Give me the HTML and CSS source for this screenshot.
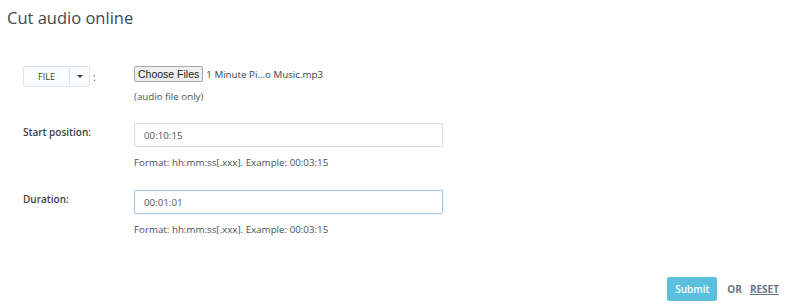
FILE: index.html
```html
<!DOCTYPE html>
<html lang="en">
<head>
    <meta charset="UTF-8">
    <title>Cut audio online</title>
    <link rel="stylesheet" href="styles.css">
</head>
<body>
    <h1 class="title">Cut audio online</h1>

    <form class="cut-form">
        <div class="row row-file">
            <div class="label-col">
                <div class="split-btn">
                    <span class="split-main">FILE</span>
                    <span class="split-caret"><span class="caret"></span></span>
                </div>
                <span class="colon">:</span>
            </div>
            <div class="control-col">
                <div class="file-line">
                    <span class="choose-btn">Choose Files</span>
                    <span class="file-name">1 Minute Pi...o Music.mp3</span>
                </div>
                <div class="hint hint-file">(audio file only)</div>
            </div>
        </div>

        <div class="row row-start">
            <label class="label-col field-label" for="start">Start position:</label>
            <div class="control-col">
                <input type="text" id="start" class="text-input" value="00:10:15">
                <div class="hint">Format: hh:mm:ss[.xxx]. Example: 00:03:15</div>
            </div>
        </div>

        <div class="row row-duration">
            <label class="label-col field-label" for="duration">Duration:</label>
            <div class="control-col">
                <input type="text" id="duration" class="text-input focused" value="00:01:01">
                <div class="hint">Format: hh:mm:ss[.xxx]. Example: 00:03:15</div>
            </div>
        </div>

        <div class="actions">
            <button type="button" class="submit-btn">Submit</button>
            <span class="or">OR</span>
            <a class="reset" href="#">RESET</a>
        </div>
    </form>
</body>
</html>
```

FILE: styles.css
```css
body {
    margin: 0;
    font-family: "Open Sans", Arial, sans-serif;
    color: #454c55;
    background: #fff;
}

.title {
    margin: 0;
    padding: 6px 0 0 7px;
    font-size: 16.5px;
    font-weight: 400;
    line-height: 24px;
    color: #3f4650;
}

.cut-form {
    padding: 36px 0 0 23px;
}

.row {
    display: flex;
}

.label-col {
    width: 111px;
    flex-shrink: 0;
}

.row-file .label-col {
    display: flex;
    align-items: center;
    align-self: flex-start;
}

.split-btn {
    display: flex;
    height: 21px;
    border: 1px solid #dfe3e7;
    border-radius: 2px;
    background: #fbfcfd;
    box-sizing: border-box;
}

.split-main {
    width: 45px;
    font-size: 9px;
    line-height: 19px;
    text-align: center;
    color: #3a3f45;
    border-right: 1px solid #dfe3e7;
}

.split-caret {
    width: 19px;
    display: flex;
    align-items: center;
    justify-content: center;
}

.caret {
    width: 0;
    height: 0;
    border-left: 3px solid transparent;
    border-right: 3px solid transparent;
    border-top: 3px solid #3a3f45;
}

.colon {
    margin-left: 3px;
    font-size: 10px;
    color: #3a3f45;
}

.control-col {
    width: 309px;
}

.file-line {
    display: flex;
    align-items: center;
}

.choose-btn {
    font-family: "Liberation Sans", Arial, sans-serif;
    font-size: 10.5px;
    line-height: 14px;
    padding: 0 3px;
    color: #222;
    background: #efefef;
    border: 1px solid #a8a8a8;
    border-radius: 2px;
}

.file-name {
    margin-left: 3px;
    font-size: 9.75px;
    color: #3a3f45;
}

.hint {
    font-size: 9.75px;
    color: #4a5058;
    margin-top: 9px;
}

.hint-file {
    margin-top: 8px;
}

.row-start {
    margin-top: 20px;
}

.row-duration {
    margin-top: 21px;
}

.field-label {
    font-size: 10px;
    font-weight: 600;
    color: #3a3f45;
    padding-top: 2px;
}

.text-input {
    display: block;
    width: 309px;
    height: 24px;
    box-sizing: border-box;
    padding: 0 9px;
    font-family: "Open Sans", Arial, sans-serif;
    font-size: 9.75px;
    color: #555;
    border: 1px solid #d8dcdf;
    border-radius: 2px;
    outline: none;
}

.text-input.focused {
    border-color: #9ecbee;
    box-shadow: 0 0 2px #cfe5f7;
}

.actions {
    display: flex;
    align-items: center;
    justify-content: flex-end;
    padding-right: 21px;
    margin-top: 41px;
}

.submit-btn {
    width: 50px;
    height: 24px;
    font-family: "Open Sans", Arial, sans-serif;
    font-size: 10px;
    font-weight: 600;
    color: #fff;
    background: #5bc0de;
    border: 1px solid #5fc0dc;
    border-radius: 2px;
    padding: 0;
}

.or {
    margin-left: 10px;
    font-size: 10px;
    font-weight: 700;
    color: #6b7787;
}

.reset {
    margin-left: 8px;
    font-size: 10px;
    font-weight: 700;
    color: #6b7787;
}
```
